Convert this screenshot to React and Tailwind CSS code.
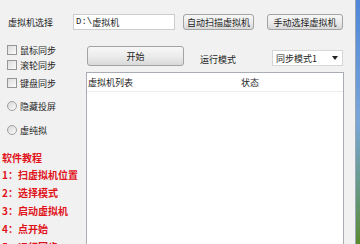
const cjk = { fontFamily: '"Noto Sans CJK SC", "Liberation Sans", sans-serif' }

function WinButton({ children, className = '' }) {
  return (
    <button
      type="button"
      className={`flex items-center justify-center rounded-[3px] border border-[#a3a3a3] bg-gradient-to-b from-[#f7f7f7] via-[#ececec] to-[#d9d9d9] text-[9px] leading-none text-[#1e1e1e] ${className}`}
    >
      {children}
    </button>
  )
}

function CheckRow({ label, className = '' }) {
  return (
    <div className={`flex h-[14px] items-center pl-[7px] ${className}`}>
      <span className="h-[10px] w-[10px] border border-[#969696] bg-gradient-to-br from-[#dcdcdc] to-[#fbfbfb]" />
      <span className="ml-[3px] text-[9px] leading-none text-[#1e1e1e]">{label}</span>
    </div>
  )
}

function RadioRow({ label, className = '' }) {
  return (
    <div className={`flex h-[14px] items-center pl-[7px] ${className}`}>
      <span className="h-[10px] w-[10px] rounded-full border border-[#a0a0a0] bg-gradient-to-br from-[#d8d8d8] to-[#fbfbfb]" />
      <span className="ml-[3px] text-[9px] leading-none text-[#1e1e1e]">{label}</span>
    </div>
  )
}

const pasos = ['1：扫虚拟机位置', '2：选择模式', '3：启动虚拟机', '4：点开始', '5：运行同步']

export default function App() {
  return (
    <div className="flex h-[244px] w-[360px] overflow-hidden" style={cjk}>
      <div className="h-full w-[356px] border-r border-[#9aa6b4] bg-[#f1f1f1]">
        {/* fila superior */}
        <div className="flex h-[30px] items-end">
          <div className="flex h-[16px] items-center">
            <span className="w-[73px] pl-[8px] text-[9px] leading-none text-[#1e1e1e]">虚拟机选择</span>
            <div className="flex h-[16px] w-[102px] items-center border border-[#cdcdcd] bg-white pl-[2px] text-[9px] leading-none text-[#1e1e1e]">
              <span style={{ fontFamily: '"Liberation Mono", "Noto Sans CJK SC", monospace' }}>D:\</span>
              <span>虚拟机</span>
            </div>
            <WinButton className="ml-[8px] h-[16px] w-[71px]">自动扫描虚拟机</WinButton>
            <WinButton className="ml-[13px] h-[16px] w-[76px]">手动选择虚拟机</WinButton>
          </div>
        </div>

        <div className="flex">
          {/* columna izquierda */}
          <div className="w-[86px] pt-[13px]">
            <CheckRow label="鼠标同步" />
            <CheckRow label="滚轮同步" className="mt-[1px]" />
            <CheckRow label="键盘同步" className="mt-[4px]" />
            <RadioRow label="隐藏投屏" className="mt-[9px]" />
            <RadioRow label="虚纯拟" className="mt-[10px]" />
            <div className="mt-[13px] flex h-[16px] items-center pl-[2px] text-[10px] font-bold leading-none text-[#e0131a]">
              软件教程
            </div>
            {pasos.map(p => (
              <div key={p} className="flex h-[18px] items-center pl-[2px] text-[10px] font-bold leading-none text-[#e0131a]">
                {p}
              </div>
            ))}
          </div>

          {/* columna derecha */}
          <div className="pt-[16px]">
            <div className="flex h-[20px] items-start">
              <WinButton className="ml-[1px] h-[20px] w-[97px]">开始</WinButton>
              <span className="ml-[16px] mt-[9px] w-[72px] text-[9px] leading-none text-[#1e1e1e]">运行模式</span>
              <div className="mt-[4px] flex h-[16px] w-[71px] items-center justify-between border border-[#d6d6d6] bg-white pl-[3px] pr-[4px]">
                <span className="text-[9px] leading-none text-[#1e1e1e]">同步模式1</span>
                <svg width="6" height="4" viewBox="0 0 6 4">
                  <path d="M0 0h6L3 4z" fill="#222" />
                </svg>
              </div>
            </div>

            <div className="mt-[6px] h-[200px] w-[258px] border border-[#a9adb3] bg-white">
              <div className="flex h-[19px] items-center border-b border-[#ececec] text-[9px] leading-none text-[#1e1e1e]">
                <span className="w-[154px] pl-[1px]">虚拟机列表</span>
                <span>状态</span>
              </div>
            </div>
          </div>
        </div>
      </div>
      <div className="h-full w-[4px] bg-gradient-to-b from-[#4f86d8] via-[#7aa6d8] to-[#5b8a2c]" />
    </div>
  )
}
